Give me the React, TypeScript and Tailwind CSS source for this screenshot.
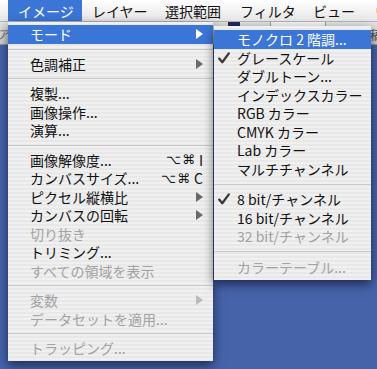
import React from "react";

type Item =
  | { sep: true }
  | {
      sep?: false;
      label: string;
      disabled?: boolean;
      arrow?: boolean;
      shortcut?: string;
      hi?: boolean;
      checked?: boolean;
    };

const mainItems: Item[] = [
  { label: "モード", arrow: true, hi: true },
  { sep: true },
  { label: "色調補正", arrow: true },
  { sep: true },
  { label: "複製..." },
  { label: "画像操作..." },
  { label: "演算..." },
  { sep: true },
  { label: "画像解像度...", shortcut: "I" },
  { label: "カンバスサイズ...", shortcut: "C" },
  { label: "ピクセル縦横比", arrow: true },
  { label: "カンバスの回転", arrow: true },
  { label: "切り抜き", disabled: true },
  { label: "トリミング..." },
  { label: "すべての領域を表示", disabled: true },
  { sep: true },
  { label: "変数", arrow: true, disabled: true },
  { label: "データセットを適用...", disabled: true },
  { sep: true },
  { label: "トラッピング...", disabled: true },
];

const subItems: Item[] = [
  { label: "モノクロ 2 階調...", hi: true },
  { label: "グレースケール", checked: true },
  { label: "ダブルトーン..." },
  { label: "インデックスカラー" },
  { label: "RGB カラー" },
  { label: "CMYK カラー" },
  { label: "Lab カラー" },
  { label: "マルチチャンネル" },
  { sep: true },
  { label: "8 bit/チャンネル", checked: true },
  { label: "16 bit/チャンネル" },
  { label: "32 bit/チャンネル", disabled: true },
  { sep: true },
  { label: "カラーテーブル...", disabled: true },
];

function Arrow({ color }: { color: string }) {
  return (
    <svg width="7" height="10" viewBox="0 0 7 10" className="shrink-0">
      <polygon points="0,0 7,5 0,10" fill={color} />
    </svg>
  );
}

function Check() {
  return (
    <svg width="12" height="12" viewBox="0 0 12 12" className="shrink-0">
      <path
        d="M1.2 6.6 L4.3 10.2 L10.8 1.4"
        fill="none"
        stroke="#3a3a3a"
        strokeWidth="2.3"
        strokeLinecap="round"
        strokeLinejoin="round"
      />
    </svg>
  );
}

function Menu({ items, sub }: { items: Item[]; sub?: boolean }) {
  return (
    <div
      className={
        sub
          ? "flex flex-col pt-[4px] pb-[4px]"
          : "flex flex-col pt-[3px] pb-[3px]"
      }
    >
      {items.map((it, i) => {
        if (it.sep) {
          return (
            <div
              key={i}
              className={
                sub
                  ? "h-[12px] flex items-center"
                  : "h-[11px] flex items-center"
              }
            >
              <div className="h-px w-full bg-[#cbcbcb]" />
            </div>
          );
        }
        const textColor = it.hi
          ? "text-white"
          : it.disabled
          ? "text-[#a2a2a2]"
          : "text-[#111111]";
        return (
          <div
            key={i}
            className={
              "relative h-[18.5px] flex items-center leading-none text-[14px] " +
              (sub ? "pl-[23px] pr-[10px] " : "pl-[22px] pr-[10px] ") +
              (it.hi ? "bg-[#3b76d6] " : "") +
              textColor
            }
          >
            {it.checked && (
              <div className="absolute left-[4px] top-[3px]">
                <Check />
              </div>
            )}
            <span className="flex-1 whitespace-nowrap">{it.label}</span>
            {it.shortcut && (
              <span className="flex items-center font-['DejaVu_Sans',sans-serif] text-[13px] text-[#111111]">
                <span>⌥</span>
                <span className="ml-[1px]">⌘</span>
                <span className="ml-[4px] font-['Noto_Sans_CJK_JP',sans-serif] text-[14px]">
                  {it.shortcut}
                </span>
              </span>
            )}
            {it.arrow && (
              <Arrow
                color={it.hi ? "#ffffff" : it.disabled ? "#b9b9b9" : "#6a6a6a"}
              />
            )}
          </div>
        );
      })}
    </div>
  );
}

export default function App() {
  const titles = [
    { t: "イメージ", w: "w-[74px]", hi: true },
    { t: "レイヤー", w: "w-[73px]" },
    { t: "選択範囲", w: "w-[75px]" },
    { t: "フィルタ", w: "w-[73px]" },
    { t: "ビュー", w: "w-[62px]" },
    { t: "ウインドウ", w: "w-[80px]" },
  ];
  return (
    <div className="relative w-[377px] h-[369px] overflow-hidden bg-[#4663aa] font-['Noto_Sans_CJK_JP',sans-serif]">
      {/* menu bar */}
      <div className="flex h-[22px] pl-[8px] bg-gradient-to-b from-white to-[#e6e6e6] border-b border-[#b4b4b4] whitespace-nowrap">
        {titles.map((x, i) => (
          <div
            key={i}
            className={
              "shrink-0 flex items-center pl-[10px] text-[14px] leading-none " +
              x.w +
              (x.hi ? " bg-[#3b76d6] text-white" : " text-[#111111]")
            }
          >
            {x.t}
          </div>
        ))}
      </div>
      {/* toolbar strip */}
      <div className="relative h-[23px] bg-gradient-to-b from-[#e4e4e4] to-[#cfcfcf] border-b border-[#9a9a9a]">
        <span className="absolute left-[-3px] top-[3px] text-[12px] text-[#666666] italic">
          ア
        </span>
        <div className="absolute left-[228px] top-0 w-[12px] h-[6px] bg-[#1f2b58]" />
        <div className="absolute left-[270px] top-0 w-[56px] h-[6px] bg-[#f4f4f4] border-x border-[#9a9a9a]" />
        <span className="absolute left-[370px] top-[4px] text-[12px] text-[#444444]">
          稿
        </span>
      </div>

      {/* main menu */}
      <div className="absolute left-[8px] top-[22px] w-[205px] bg-[repeating-linear-gradient(180deg,#f0f0f0_0px,#f0f0f0_2px,#e8e8e8_2px,#e8e8e8_4px)] shadow-[0_4px_10px_rgba(0,0,20,0.6)]">
        <Menu items={mainItems} />
      </div>

      {/* submenu */}
      <div className="absolute left-[214px] top-[26px] w-[157px] bg-[repeating-linear-gradient(180deg,#f0f0f0_0px,#f0f0f0_2px,#e8e8e8_2px,#e8e8e8_4px)] shadow-[0_4px_10px_rgba(0,0,20,0.6)]">
        <Menu items={subItems} sub />
      </div>
    </div>
  );
}
